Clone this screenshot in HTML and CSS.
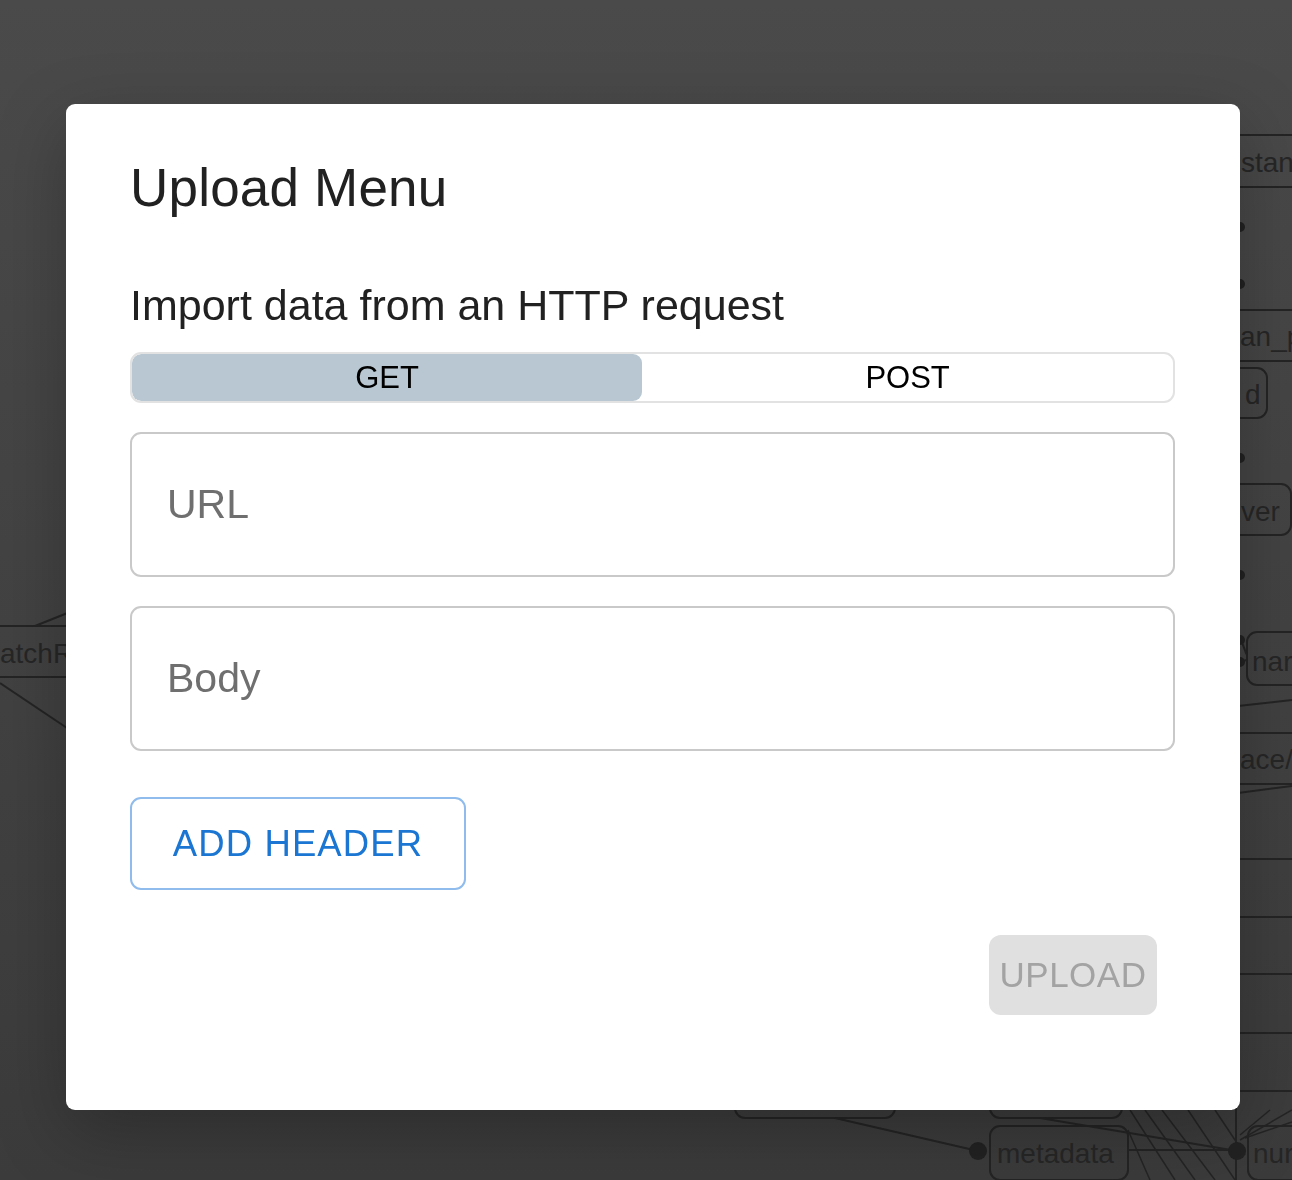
FILE: index.html
```html
<!DOCTYPE html>
<html lang="en">
<head>
<meta charset="utf-8">
<title>Upload Menu</title>
<link rel="stylesheet" href="styles.css">
</head>
<body>
<svg class="graph" width="1292" height="1180" viewBox="0 0 1292 1180" xmlns="http://www.w3.org/2000/svg">
  <defs>
    <linearGradient id="bg" x1="0" y1="0" x2="0" y2="1">
      <stop offset="0" stop-color="#4a4a4a"/>
      <stop offset="1" stop-color="#3b3b3b"/>
    </linearGradient>
  </defs>
  <rect x="0" y="0" width="1292" height="1180" fill="url(#bg)"/>
  <g stroke="#242424" stroke-width="2" fill="none">
    <line x1="1230" y1="135" x2="1292" y2="135"/>
    <line x1="1230" y1="187" x2="1292" y2="187"/>
    <line x1="1230" y1="310" x2="1292" y2="310"/>
    <line x1="1230" y1="361" x2="1292" y2="361"/>
    <rect x="1225" y="368" width="42" height="50" rx="10"/>
    <rect x="1200" y="484" width="91" height="51" rx="10"/>
    <rect x="1247" y="632" width="70" height="53" rx="10"/>
    <path d="M1238 640 C1243 640 1244 650 1247 655"/>
    <path d="M1238 662 C1243 662 1244 660 1247 660"/>
    <line x1="1238" y1="706" x2="1292" y2="700"/>
    <line x1="1230" y1="733" x2="1292" y2="733"/>
    <line x1="1230" y1="784" x2="1292" y2="784"/>
    <line x1="1238" y1="793" x2="1292" y2="786"/>
    <line x1="1238" y1="859" x2="1292" y2="859"/>
    <line x1="1238" y1="917" x2="1292" y2="917"/>
    <line x1="1238" y1="974" x2="1292" y2="974"/>
    <line x1="1238" y1="1033" x2="1292" y2="1033"/>
    <line x1="1238" y1="1091" x2="1292" y2="1091"/>
    <line x1="1236" y1="1100" x2="1236" y2="1180"/>
    <rect x="735" y="1070" width="160" height="48" rx="10"/>
    <rect x="990" y="1070" width="132" height="48" rx="10"/>
    <rect x="990" y="1126" width="138" height="54" rx="10"/>
    <rect x="1248" y="1126" width="70" height="54" rx="10"/>
    <line x1="835" y1="1118" x2="978" y2="1151"/>
    <line x1="1040" y1="1118" x2="1237" y2="1151"/>
    <line x1="1128" y1="1150" x2="1237" y2="1150"/>
    <g stroke-width="1.5">
      <line x1="1130" y1="1110" x2="1175" y2="1180"/>
      <line x1="1145" y1="1110" x2="1195" y2="1180"/>
      <line x1="1162" y1="1110" x2="1215" y2="1180"/>
      <line x1="1188" y1="1110" x2="1235" y2="1180"/>
      <line x1="1215" y1="1110" x2="1245" y2="1155"/>
      <line x1="1128" y1="1130" x2="1150" y2="1180"/>
      <line x1="1240" y1="1140" x2="1292" y2="1110"/>
      <line x1="1245" y1="1138" x2="1292" y2="1122"/>
      <line x1="1240" y1="1135" x2="1270" y2="1110"/>
    </g>
    <line x1="0" y1="626" x2="70" y2="626"/>
    <line x1="0" y1="677" x2="70" y2="677"/>
    <line x1="35" y1="626" x2="70" y2="612"/>
    <line x1="0" y1="683" x2="70" y2="730"/>
  </g>
  <g fill="#222">
    <circle cx="1240" cy="227" r="5"/>
    <circle cx="1240" cy="284" r="5"/>
    <circle cx="1240" cy="458" r="5"/>
    <circle cx="1240" cy="575" r="5"/>
    <circle cx="1240" cy="640" r="5"/>
    <circle cx="1240" cy="662" r="5"/>
    <circle cx="978" cy="1151" r="9"/>
    <circle cx="1237" cy="1151" r="9"/>
  </g>
  <g class="graph-text" fill="#262626">
    <text x="1241" y="172">stan</text>
    <text x="1240" y="346">an_p</text>
    <text x="1245" y="404">d</text>
    <text x="1241" y="521">ver</text>
    <text x="1252" y="671">nar</text>
    <text x="1240" y="769">ace/r</text>
    <text x="997" y="1163">metadata</text>
    <text x="1253" y="1163">nur</text>
    <text x="0" y="663">atchR</text>
  </g>
</svg>

<div class="backdrop">
  <div class="dialog">
    <h2 class="dialog-title">Upload Menu</h2>
    <p class="dialog-subtitle">Import data from an HTTP request</p>
    <div class="toggle-group">
      <button class="toggle toggle-selected">GET</button>
      <button class="toggle">POST</button>
    </div>
    <div class="field"><input class="field-input" type="text" placeholder="URL"></div>
    <div class="field"><input class="field-input" type="text" placeholder="Body"></div>
    <div class="header-row">
      <button class="btn-outlined">ADD HEADER</button>
    </div>
    <div class="actions">
      <button class="btn-disabled" disabled>UPLOAD</button>
    </div>
  </div>
</div>
</body>
</html>
```

FILE: styles.css
```css
html, body {
  margin: 0;
  padding: 0;
  width: 1292px;
  height: 1180px;
  overflow: hidden;
  font-family: "Liberation Sans", Arial, sans-serif;
}

.graph {
  position: absolute;
  left: 0;
  top: 0;
  display: block;
}

.graph-text {
  font-family: "Liberation Sans", Arial, sans-serif;
  font-size: 28px;
}

.backdrop {
  position: fixed;
  inset: 0;
  padding: 104px 0 0 66px;
  box-sizing: border-box;
}

.dialog {
  width: 1174px;
  height: 1006px;
  box-sizing: border-box;
  background: #fff;
  border-radius: 9px;
  padding: 53px 65px 0 64px;
  box-shadow: 0 22px 70px rgba(0, 0, 0, 0.25);
  display: flex;
  flex-direction: column;
}

.dialog-title {
  margin: 0;
  font-size: 53px;
  line-height: 62px;
  font-weight: 400;
  color: #212121;
  letter-spacing: 0.2px;
}

.dialog-subtitle {
  margin: 61px 0 0 0;
  font-size: 43px;
  line-height: 50px;
  color: #212121;
}

.toggle-group {
  margin-top: 22px;
  height: 51px;
  box-sizing: border-box;
  border: 2px solid #e2e2e2;
  border-radius: 11px;
  display: flex;
  overflow: hidden;
}

.toggle {
  flex: 1 1 auto;
  border: none;
  background: transparent;
  font-family: "Liberation Sans", Arial, sans-serif;
  font-size: 31px;
  color: #000;
  padding: 0;
  margin: 0;
  border-radius: 9px;
}

.toggle-selected {
  background: #b8c7d1;
}

.field {
  margin-top: 29px;
  height: 145px;
  box-sizing: border-box;
  border: 2px solid #c9c9c9;
  border-radius: 11px;
  display: flex;
  align-items: center;
}

.field-input {
  flex: 1;
  border: none;
  outline: none;
  background: transparent;
  padding: 0 0 0 35px;
  font-family: "Liberation Sans", Arial, sans-serif;
  font-size: 41px;
  color: #212121;
}

.field-input::placeholder {
  color: #6f6f6f;
  opacity: 1;
}

.header-row {
  margin-top: 46px;
  display: flex;
}

.btn-outlined {
  width: 336px;
  height: 93px;
  box-sizing: border-box;
  border: 2px solid #8fbcec;
  border-radius: 11px;
  background: #fff;
  color: #1a76d2;
  font-family: "Liberation Sans", Arial, sans-serif;
  font-size: 36.5px;
  letter-spacing: 1.1px;
  padding: 0;
}

.actions {
  margin-top: 45px;
  display: flex;
  justify-content: flex-end;
  padding-right: 18px;
}

.btn-disabled {
  width: 168px;
  height: 80px;
  border: none;
  border-radius: 12px;
  background: #e0e0e0;
  color: #a3a3a3;
  font-family: "Liberation Sans", Arial, sans-serif;
  font-size: 35px;
  letter-spacing: 0.5px;
  padding: 0;
}
```
